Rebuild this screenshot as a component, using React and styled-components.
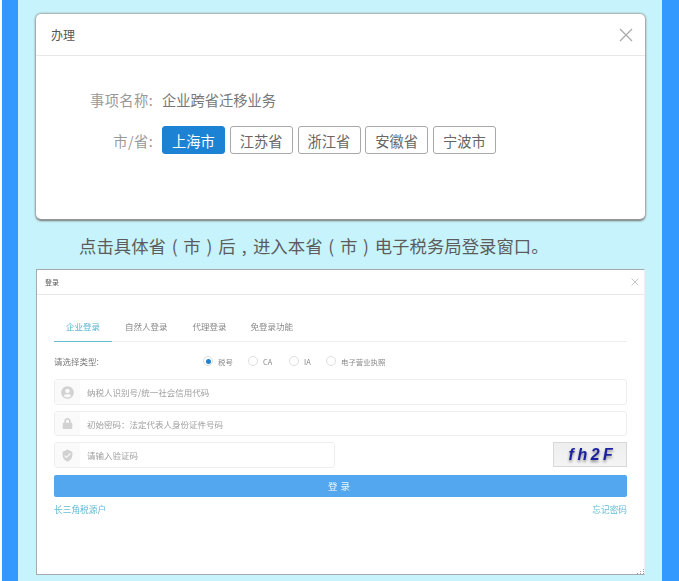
import React from "react";
import styled, {createGlobalStyle} from "styled-components";
import {FaUserCircle, FaLock} from "react-icons/fa";
import {MdVerifiedUser} from "react-icons/md";

const GlobalStyle = createGlobalStyle`
    html, body {
        margin: 0;
        padding: 0;
        background: #fdfefe;
        overflow: hidden;
    }
    * { box-sizing: border-box; }
    body {
        font-family: "Noto Sans CJK SC", "Liberation Sans", sans-serif;
    }
`;

const Page = styled.div`
    width: 679px;
    height: 581px;
    padding-left: 2px;
    overflow: hidden;
`;

const Frame = styled.div`
    height: 100%;
    border-left: 16px solid #3399ff;
    border-right: 17px solid #3399ff;
    background: #c7f4fc;
    padding: 14px 17px 0 18px;
`;

const ModalOne = styled.section`
    height: 205px;
    background: white;
    border-radius: 5px;
    box-shadow: 0 0 2px 1px #a0a2a3, 0 2px 2px #6f7172;
`;

const ModalHeader = styled.header`
    display: flex;
    align-items: center;
    justify-content: space-between;
    height: ${({height}) => height};
    padding: ${({padding}) => padding};
    border-bottom: 1px solid #e8e8e8;
`;

const ModalTitle = styled.h2`
    margin: 0;
    font-weight: 400;
    font-size: ${({size}) => size};
    color: #555;
`;

const Close = styled.svg`
    display: block;
    width: ${({size}) => size};
    height: ${({size}) => size};
    fill: none;
    stroke: #a8a8a8;
    stroke-width: 1.2;
`;

const ModalOneBody = styled.div`
    display: flex;
    flex-direction: column;
    gap: 14px;
    padding-top: 30px;
`;

const FieldRow = styled.div`
    display: flex;
    align-items: center;
    min-height: ${({height}) => height};
    font-size: 14.25px;
    color: #777;
`;

const FieldLabel = styled.span`
    width: 117px;
    margin-right: 9px;
    text-align: right;
    letter-spacing: 0.4px;
    color: #999;
`;

const Choices = styled.div`
    display: flex;
    gap: 4.75px;
`;

const Choice = styled.button`
    width: 63px;
    height: 28px;
    padding: 0;
    font: inherit;
    font-size: 14.25px;
    border-radius: 3px;
    color: ${({active}) => active ? 'white' : '#666'};
    background: ${({active}) => active ? '#1c83d4' : 'white'};
    border: 1px solid ${({active}) => active ? '#1c83d4' : '#a8a8a8'};
`;

const Caption = styled.p`
    margin: 18px 0 14px 43px;
    height: 18px;
    line-height: 18px;
    font-size: 17.4px;
    white-space: nowrap;
    color: #5c5c5c;
`;

const Punct = styled.span`
    display: inline-block;
    width: 1em;
    text-align: center;
`;

const ModalTwo = styled.section`
    position: relative;
    width: 609px;
    height: 306px;
    background: white;
    border: 1px solid #a5a9aa;
    border-right-color: #eee;
    font-size: 8.5px;
    color: #777;
`;

const BlurredContent = styled.div`
    filter: blur(0.4px);
`;

const LoginBody = styled.div`
    padding: 23px 17px 0 17px;
`;

const Tabs = styled.nav`
    display: flex;
    height: 24px;
    border-bottom: 1px solid #eee;
`;

const Tab = styled.div`
    margin-right: ${({gap}) => gap};
    padding-left: ${({left}) => left};
    width: ${({width}) => width};
    height: 24px;
    line-height: 16px;
    font-size: 8.5px;
    color: ${({active}) => active ? '#55b7d0' : '#888'};
    border-bottom: ${({active}) => active ? '1px solid #62bcd3' : 'none'};
`;

const TypeRow = styled.div`
    display: flex;
    align-items: center;
    height: 20px;
    margin-top: 9px;
    margin-bottom: 8px;
    color: #777;
`;

const TypeLabel = styled.span`
    width: 149px;
    font-size: 8.5px;
`;

const RadioItem = styled.label`
    display: flex;
    align-items: center;
    width: ${({width}) => width};
    font-size: 7.4px;
    color: #888;
`;

const RadioCircle = styled.span`
    display: flex;
    align-items: center;
    justify-content: center;
    width: 10px;
    height: 10px;
    margin-right: 5px;
    border-radius: 50%;
    border: 1px solid #ddd;

    &::after {
        content: "";
        display: ${({checked}) => checked ? 'block' : 'none'};
        width: 5px;
        height: 5px;
        border-radius: 50%;
        background: #1c83d4;
    }
`;

const InputStack = styled.div`
    display: flex;
    flex-direction: column;
    gap: 6px;
`;

const InputLine = styled.div`
    display: flex;
    justify-content: space-between;
`;

const InputBox = styled.div`
    display: flex;
    align-items: center;
    width: ${({width}) => width || '100%'};
    height: ${({height}) => height || '26px'};
    border: 1px solid #eee;
    border-radius: 3px;
    overflow: hidden;
`;

const InputIcon = styled.span`
    display: flex;
    align-items: center;
    justify-content: center;
    flex: none;
    width: 25px;
    height: 100%;
    margin-right: 7px;
    background: #fafafa;
    color: #d2d2d2;
    font-size: ${({size}) => size || '13px'};
`;

const Placeholder = styled.span`
    font-size: 8.5px;
    color: #a0a0a0;
    white-space: nowrap;
`;

const Captcha = styled.div`
    display: flex;
    align-items: center;
    justify-content: center;
    width: 74px;
    height: 25px;
    padding-left: 5px;
    background: linear-gradient(#eeeeee, #f4f4f4);
    border: 1px solid #d8d8d8;
    font-family: "Liberation Sans", sans-serif;
    font-style: italic;
    font-weight: 700;
    font-size: 16px;
    letter-spacing: 3.5px;
    color: #1a1f9e;
    text-shadow: 0 2px 3px #888;
`;

const SubmitButton = styled.button`
    display: block;
    width: 100%;
    height: 22px;
    margin-top: 7px;
    padding: 0;
    border: none;
    border-radius: 2px;
    background: #52a7ee;
    color: #eef6fd;
    font: inherit;
    font-size: 9.5px;
    letter-spacing: 3px;
`;

const Links = styled.div`
    display: flex;
    justify-content: space-between;
    margin-top: 6px;
    font-size: 8.7px;
    color: #62bcd3;
`;

const ResizeGrip = styled.svg`
    position: absolute;
    right: -1px;
    bottom: -1px;
    width: 9px;
    height: 6px;
    fill: #a0a0a0;
`;

const provinces = ['上海市', '江苏省', '浙江省', '安徽省', '宁波市'];

const tabs = [
    {label: '企业登录', left: '12px', width: '58px', gap: '13px', active: true},
    {label: '自然人登录', gap: '25px'},
    {label: '代理登录', gap: '24px'},
    {label: '免登录功能', gap: '0'},
];

const radios = [
    {label: '税号', width: '45px', checked: true},
    {label: 'CA', width: '41px'},
    {label: 'IA', width: '37px'},
    {label: '电子营业执照', width: '70px'},
];

function CloseIcon({size}) {
    return (
        <Close size={size} viewBox="0 0 14 14">
            <path d="M1 1 L13 13 M13 1 L1 13"/>
        </Close>
    );
}

export default function App() {
    return (<>
        <GlobalStyle/>
        <Page>
            <Frame>
                <ModalOne>
                    <ModalHeader height="42px" padding="0 12px 0 15px">
                        <ModalTitle size="12px">办理</ModalTitle>
                        <CloseIcon size="14px"/>
                    </ModalHeader>
                    <ModalOneBody>
                        <FieldRow height="26px">
                            <FieldLabel>事项名称:</FieldLabel>
                            <span>企业跨省迁移业务</span>
                        </FieldRow>
                        <FieldRow height="28px">
                            <FieldLabel>市/省:</FieldLabel>
                            <Choices>
                                {provinces.map((name, i) => (
                                    <Choice key={name} active={i === 0}>{name}</Choice>
                                ))}
                            </Choices>
                        </FieldRow>
                    </ModalOneBody>
                </ModalOne>

                <Caption>
                    点击具体省<Punct>(</Punct>市<Punct>)</Punct>后<Punct>,</Punct>进入本省<Punct>(</Punct>市<Punct>)</Punct>电子税务局登录窗口。
                </Caption>

                <ModalTwo>
                    <BlurredContent>
                        <ModalHeader height="25px" padding="0 5px 0 8px">
                            <ModalTitle size="7px">登录</ModalTitle>
                            <CloseIcon size="8px"/>
                        </ModalHeader>
                        <LoginBody>
                            <Tabs>
                                {tabs.map(tab => (
                                    <Tab key={tab.label} {...tab}>{tab.label}</Tab>
                                ))}
                            </Tabs>
                            <TypeRow>
                                <TypeLabel>请选择类型:</TypeLabel>
                                {radios.map(radio => (
                                    <RadioItem key={radio.label} width={radio.width}>
                                        <RadioCircle checked={radio.checked}/>
                                        {radio.label}
                                    </RadioItem>
                                ))}
                            </TypeRow>
                            <InputStack>
                                <InputBox>
                                    <InputIcon><FaUserCircle/></InputIcon>
                                    <Placeholder>纳税人识别号/统一社会信用代码</Placeholder>
                                </InputBox>
                                <InputBox height="25px">
                                    <InputIcon size="11px"><FaLock/></InputIcon>
                                    <Placeholder>初始密码：法定代表人身份证件号码</Placeholder>
                                </InputBox>
                                <InputLine>
                                    <InputBox width="281px">
                                        <InputIcon><MdVerifiedUser/></InputIcon>
                                        <Placeholder>请输入验证码</Placeholder>
                                    </InputBox>
                                    <Captcha>fh2F</Captcha>
                                </InputLine>
                            </InputStack>
                            <SubmitButton>登录</SubmitButton>
                            <Links>
                                <span>长三角税源户</span>
                                <span>忘记密码</span>
                            </Links>
                        </LoginBody>
                    </BlurredContent>
                    <ResizeGrip viewBox="0 0 9 6">
                        <rect x="7" y="0" width="1" height="1"/>
                        <rect x="4" y="2" width="1" height="1"/>
                        <rect x="7" y="2" width="1" height="1"/>
                        <rect x="1" y="4" width="1" height="1"/>
                        <rect x="4" y="4" width="1" height="1"/>
                        <rect x="7" y="4" width="1" height="1"/>
                    </ResizeGrip>
                </ModalTwo>
            </Frame>
        </Page>
    </>);
}
